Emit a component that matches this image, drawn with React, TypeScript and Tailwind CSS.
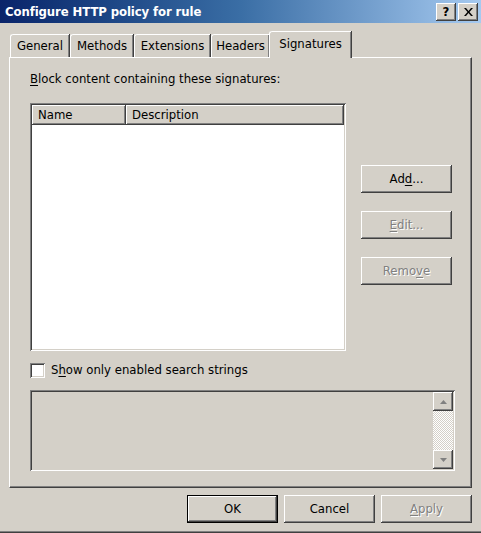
import React, { useState } from 'react';

const raised =
  'shadow-[inset_-1px_-1px_#404040,inset_1px_1px_#ffffff,inset_-2px_-2px_#808080,inset_2px_2px_#d4d0c8]';
const sunken =
  'shadow-[inset_1px_1px_#808080,inset_-1px_-1px_#ffffff,inset_2px_2px_#404040,inset_-2px_-2px_#d4d0c8]';

const Btn: React.FC<{ label: React.ReactNode; disabled?: boolean; def?: boolean; className?: string }> = ({
  label,
  disabled,
  def,
  className = '',
}) => (
  <button
    className={`h-[28px] w-[91px] bg-[#d4d0c8] text-[13px] ${
      def ? 'border border-black' : ''
    } ${raised} ${disabled ? 'text-[#808080] [text-shadow:1px_1px_#ffffff]' : 'text-black'} ${className}`}
  >
    {label}
  </button>
);

const tabs = ['General', 'Methods', 'Extensions', 'Headers'];
const tabWidths = ['w-[59px]', 'w-[63px]', 'w-[76px]', 'w-[58px]'];

const App: React.FC = () => {
  const [showOnly, setShowOnly] = useState(false);

  return (
    <div className="w-[481px] h-[533px] bg-[#d4d0c8] flex flex-col overflow-hidden font-['DejaVu_Sans_Condensed','DejaVu_Sans',sans-serif] text-black select-none">
      {/* title bar */}
      <div className="h-[23px] flex items-center justify-between pl-[5px] pr-[3px] bg-gradient-to-r from-[#0a246a] via-[#3a6ea5] to-[#a6caf0]">
        <span className="text-white font-bold text-[13px] leading-none tracking-[-0.1px]">Configure HTTP policy for rule</span>
        <div className="flex gap-[2px]">
          <div className={`w-[20px] h-[18px] bg-[#d4d0c8] ${raised} flex items-center justify-center text-[13px] font-bold leading-none`}>?</div>
          <div className={`w-[20px] h-[18px] bg-[#d4d0c8] ${raised} flex items-center justify-center`}>
            <svg width="9" height="8" viewBox="0 0 9 8">
              <path d="M0 0h2l2.5 3 2.5-3h2L5.5 4 9 8H7L4.5 5 2 8H0l3.5-4z" fill="#000" />
            </svg>
          </div>
        </div>
      </div>

      <div className="flex-1 flex flex-col px-[9px] pt-[7px]">
        {/* tabs */}
        <div className="h-[27px] flex items-end pl-[1px] relative z-10">
          {tabs.map((t, i) => (
            <div
              key={t}
              className={`${tabWidths[i]} h-[23px] mr-[1px] flex items-center justify-center text-[13px] border-t border-l border-white rounded-tl-[3px] shadow-[inset_-1px_0_#808080,1px_0_#404040] bg-[#d4d0c8]`}
            >
              {t}
            </div>
          ))}
          <div className="w-[82px] h-[27px] -ml-[1px] mb-[-1px] flex items-center justify-center text-[13px] border-t border-l border-white rounded-tl-[3px] shadow-[inset_-1px_0_#808080,1px_0_#404040] bg-[#d4d0c8] pb-[3px]">
            Signatures
          </div>
        </div>

        {/* panel */}
        <div className="h-[431px] border-t border-l border-white border-r border-r-[#404040] border-b border-b-[#404040] shadow-[inset_-1px_-1px_#808080] pl-[20px] pr-[16px] pt-[13px] flex flex-col">
          <div className="text-[13px] leading-[16px]">
            <span className="underline underline-offset-2">B</span>lock content containing these signatures:
          </div>

          <div className="flex mt-[16px]">
            <div className={`w-[316px] h-[248px] bg-white p-[2px] ${sunken} flex flex-col`}>
              <div className="flex h-[20px] text-[13px]">
                <div className={`w-[94px] bg-[#d4d0c8] ${raised} pl-[6px] flex items-center`}>Name</div>
                <div className={`flex-1 bg-[#d4d0c8] ${raised} pl-[6px] flex items-center`}>Description</div>
              </div>
              <div className="flex-1" />
            </div>

            <div className="flex flex-col pl-[15px] pt-[62px] gap-[18px]">
              <Btn label={<>Ad<span className="underline underline-offset-2">d</span>...</>} className="h-[27px]" />
              <Btn label={<><span className="underline underline-offset-2">E</span>dit...</>} disabled className="h-[27px]" />
              <Btn label={<>Remo<span className="underline underline-offset-2">v</span>e</>} disabled className="h-[27px]" />
            </div>
          </div>

          <label className="flex items-center mt-[11px] h-[16px] text-[13px]" onClick={() => setShowOnly(!showOnly)}>
            <span className={`w-[15px] h-[15px] bg-white ${sunken} mr-[6px] flex items-center justify-center`}>
              {showOnly && (
                <svg width="9" height="9" viewBox="0 0 9 9">
                  <path d="M1 4l2 2 5-5" stroke="#000" strokeWidth="1.6" fill="none" />
                </svg>
              )}
            </span>
            S<span className="underline underline-offset-2">h</span>ow only enabled search strings
          </label>

          <div className={`mt-[12px] w-[425px] h-[81px] bg-[#d4d0c8] p-[2px] ${sunken} flex justify-end`}>
            <div className="w-[20px] flex flex-col">
              <div className={`h-[19px] bg-[#d4d0c8] ${raised} flex items-center justify-center`}>
                <svg width="7" height="4" viewBox="0 0 7 4"><path d="M3.5 0L7 4H0z" fill="#808080" /></svg>
              </div>
              <div className="flex-1 bg-[repeating-conic-gradient(#ffffff_0_25%,#d4d0c8_0_50%)] bg-[length:2px_2px]" />
              <div className={`h-[19px] bg-[#d4d0c8] ${raised} flex items-center justify-center`}>
                <svg width="7" height="4" viewBox="0 0 7 4"><path d="M0 0h7L3.5 4z" fill="#808080" /></svg>
              </div>
            </div>
          </div>
        </div>

        {/* buttons */}
        <div className="flex justify-end gap-[6px] mt-[7px]">
          <Btn label="OK" def />
          <Btn label="Cancel" />
          <Btn label={<><span className="underline underline-offset-2">A</span>pply</>} disabled />
        </div>
      </div>
      <div className="h-[2px] bg-[#808080] border-b border-[#404040]" />
    </div>
  );
};

export default App;
